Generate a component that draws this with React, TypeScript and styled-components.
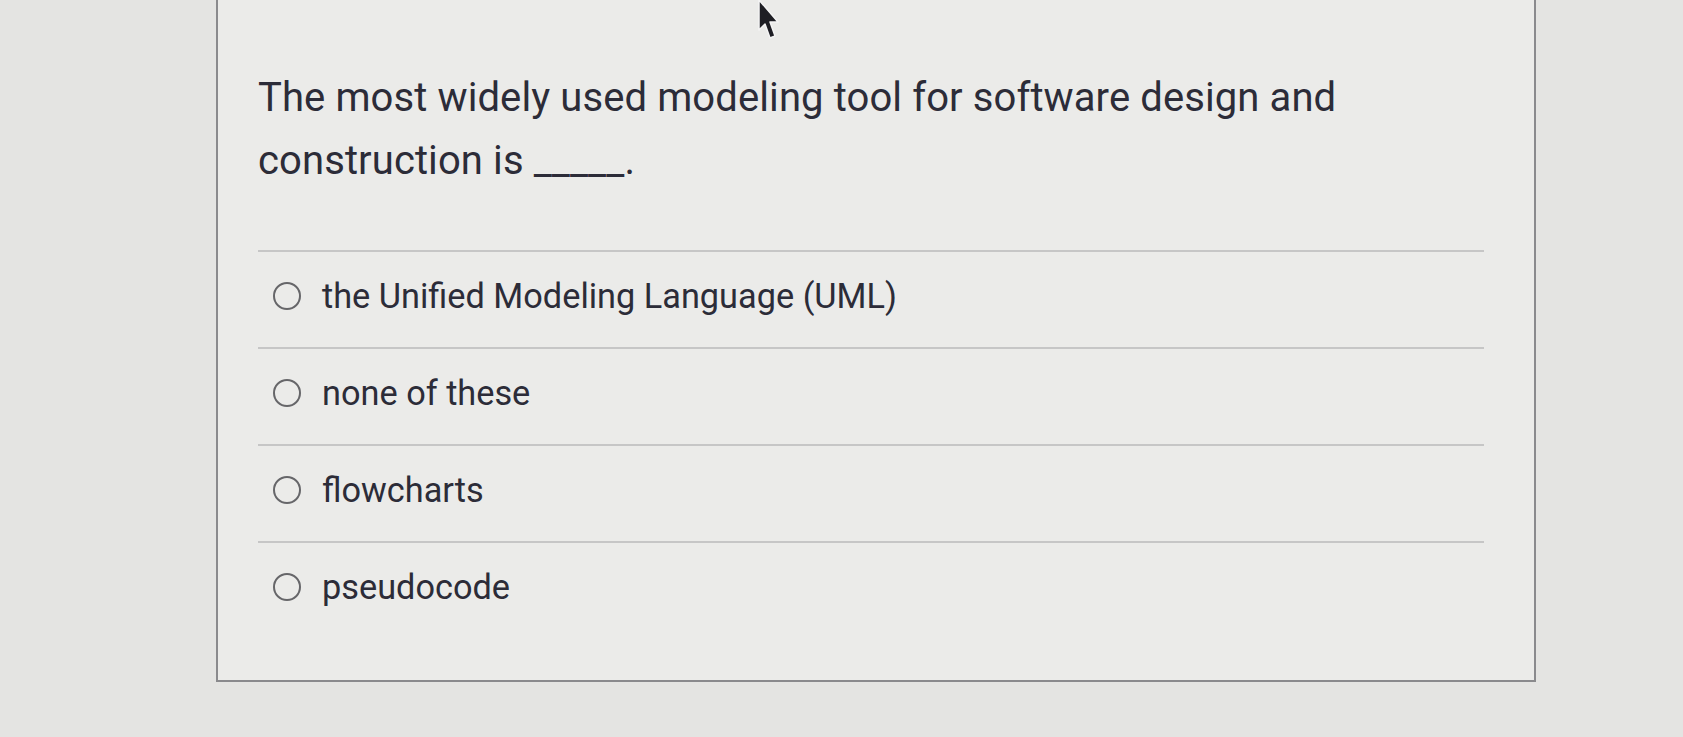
import React from "react";
import styled, { createGlobalStyle } from "styled-components";

const GlobalStyle = createGlobalStyle`
  html, body {
    margin: 0;
    padding: 0;
    background: #e4e4e2;
  }
  body {
    font-family: Roboto, "Liberation Sans", Arial, sans-serif;
  }
`;

const Page = styled.div`
  position: relative;
  width: 1683px;
  height: 737px;
  overflow: hidden;
  background: #e4e4e2;
  padding-left: 216px;
  box-sizing: border-box;
`;

const Card = styled.div`
  width: 1320px;
  height: 684px;
  margin-top: -2px;
  box-sizing: border-box;
  background: #ebebe9;
  border: 2px solid #8a8a8d;
  border-top: none;
  padding: 68px 50px 0 40px;
`;

const Question = styled.p`
  margin: 0;
  max-width: 1120px;
  font-size: 40px;
  line-height: 63px;
  color: #2c2c38;
  letter-spacing: 0.1px;
`;

const Options = styled.ul`
  list-style: none;
  margin: 58px 0 0 0;
  padding: 0;
`;

const Option = styled.li`
  display: flex;
  align-items: center;
  gap: 21px;
  height: 97px;
  padding: 0 0 7px 15px;
  border-top: 2px solid #c6c6c6;
  box-sizing: border-box;
  font-size: 34.3px;
  color: #2c2c38;
`;

const Radio = styled.span`
  width: 28px;
  height: 28px;
  flex: none;
  box-sizing: border-box;
  border: 2.5px solid #666669;
  border-radius: 50%;
`;

const Cursor = styled.svg`
  position: absolute;
  left: 756px;
  top: -2px;
  width: 24px;
  height: 44px;
`;

const choices = [
  "the Unified Modeling Language (UML)",
  "none of these",
  "flowcharts",
  "pseudocode",
];

const App: React.FC = () => {
  return (
    <Page>
      <GlobalStyle />
      <Card>
        <Question>
          The most widely used modeling tool for software design and
          construction is _____.
        </Question>
        <Options>
          {choices.map((c) => (
            <Option key={c}>
              <Radio />
              <span>{c}</span>
            </Option>
          ))}
        </Options>
      </Card>
      <Cursor viewBox="0 0 24 44">
        <path
          d="M3 2 L3 32 L9 26 L14 40 L19 38 L14 24 L22 24 Z"
          fill="#1e1e24"
          stroke="#f4f4f4"
          strokeWidth="1.5"
          strokeLinejoin="round"
        />
      </Cursor>
    </Page>
  );
};

export default App;
